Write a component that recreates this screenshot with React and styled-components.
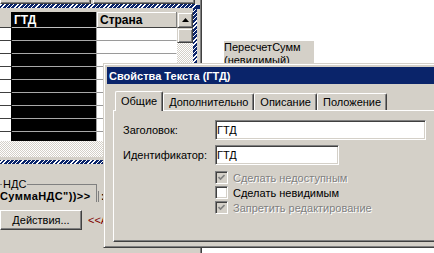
import React from 'react';
import styled, { createGlobalStyle } from 'styled-components';

const face = '#d4d0c8';

const GlobalStyle = createGlobalStyle`
  html, body { margin: 0; padding: 0; }
  body {
    background: ${face};
    font-family: "Liberation Sans", Arial, sans-serif;
    font-size: 11px;
    color: #000;
    overflow: hidden;
  }
  * { box-sizing: border-box; }
`;

const Screen = styled.div`
  position: relative;
  width: 434px;
  height: 253px;
  overflow: hidden;
  display: grid;
  grid-template-columns: 200px 1fr;
`;

const LeftPane = styled.div`
  display: flex;
  flex-direction: column;
  min-width: 0;
`;

const TopButtons = styled.div`
  display: flex;
  gap: 2px;
  height: 4px;
`;

const ButtonStub = styled.div`
  width: ${p => p.$w}px;
  border-left: 1px solid #fff;
  border-right: 1px solid #404040;
  border-bottom: 1px solid #404040;
  box-shadow: inset -1px -1px #808080;
`;

const SelectFrame = styled.div`
  position: relative;
  margin-left: -4px;
  width: 201px;
  padding: 4px;
  background: repeating-linear-gradient(-45deg, #0a246a 0 2px, #fff 2px 3px);
`;

const Handle = styled.div`
  position: absolute;
  top: 1px;
  right: -3px;
  width: 4px;
  height: 4px;
  background: #0a246a;
`;

const FrameInner = styled.div`
  background: ${face};
  padding: 4px 0 3px;
  display: flex;
  flex-direction: column;
`;

const Table = styled.div`
  display: flex;
  height: 129px;
`;

const Grid = styled.div`
  display: grid;
  grid-template-columns: 12px 85px 80px;
  grid-template-rows: 16px;
  grid-auto-rows: 13px;
  width: 177px;
  overflow: hidden;
  background: #fff;
`;

const HeadCell = styled.div`
  display: flex;
  align-items: center;
  padding-left: ${p => (p.$kind === 'sel' ? 2 : 3)}px;
  font-size: 12px;
  font-weight: bold;
  white-space: nowrap;
  background: ${p => (p.$kind === 'sel' ? '#000' : face)};
  color: ${p => (p.$kind === 'sel' ? '#fff' : '#000')};
  border-bottom: 1px solid ${p => (p.$kind === 'sel' ? '#c0c0c0' : '#404040')};
  border-right: 1px solid ${p => (p.$kind === 'stub' ? '#000' : p.$kind === 'sel' ? '#a0a0a0' : '#808080')};
  box-shadow: ${p => (p.$kind === 'plain' ? 'inset 1px 1px #fff' : 'none')};
`;

const Cell = styled.div`
  background: ${p => (p.$kind === 'sel' ? '#000' : '#fff')};
  border-bottom: 1px solid ${p => (p.$kind === 'sel' ? '#a8a8a8' : p.$kind === 'stub' ? '#404040' : '#9a9a9a')};
  border-right: 1px solid ${p => (p.$kind === 'stub' ? '#000' : p.$kind === 'sel' ? '#a0a0a0' : 'transparent')};
`;

const raised = `
  border: 1px solid;
  border-color: ${face} #404040 #404040 ${face};
  box-shadow: inset 1px 1px #fff, inset -1px -1px #808080;
  background: ${face};
`;

const checker = `
  background-color: #fff;
  background-image: repeating-conic-gradient(${face} 0 25%, #fff 0 50%);
  background-size: 2px 2px;
`;

const VScroll = styled.div`
  width: 16px;
  display: flex;
  flex-direction: column;
`;

const ScrollButton = styled.div`
  ${raised}
  height: 16px;
  display: flex;
  align-items: center;
  justify-content: center;
`;

const Thumb = styled.div`
  ${raised}
  height: 15px;
`;

const Track = styled.div`
  ${checker}
  flex: 1;
`;

const HTrack = styled.div`
  ${checker}
  height: 16px;
`;

const BottomArea = styled.div`
  display: flex;
  flex-direction: column;
  padding-top: 14px;
  gap: 8px;
`;

const FieldRow = styled.div`
  display: flex;
  align-items: flex-end;
`;

const GroupBox = styled.fieldset`
  width: 97px;
  height: 24px;
  margin: 0;
  padding: 0 0 1px 0;
  min-width: 0;
  border: none;
  border-top: 1px solid #808080;
  border-right: 1px solid #808080;
`;

const Legend = styled.legend`
  margin-left: 2px;
  padding: 0 1px;
  line-height: 13px;
`;

const Formula = styled.div`
  white-space: nowrap;
  font-weight: bold;
  line-height: 11px;
  letter-spacing: 0.4px;
`;

const SideField = styled.div`
  margin-left: 1px;
  height: 11px;
  padding-left: 2px;
  border-left: 1px solid #808080;
  line-height: 11px;
  font-weight: bold;
`;

const ActionRow = styled.div`
  display: flex;
  align-items: center;
  gap: 6px;
`;

const PushButton = styled.div`
  width: 82px;
  height: 20px;
  display: flex;
  align-items: center;
  justify-content: center;
  border: 1px solid;
  border-color: #fff #404040 #404040 #fff;
  box-shadow: inset -1px -1px #808080;
  u { text-decoration: underline; }
`;

const RedText = styled.span`
  color: #800000;
  white-space: nowrap;
`;

const Canvas = styled.div`
  background: #fff;
  border-left: 1px solid #808080;
  box-shadow: inset 1px 0 #404040;
  padding: 41px 0 0 23px;
`;

const FormLabel = styled.div`
  width: 90px;
  background: ${face};
  line-height: 13px;
`;

const Dialog = styled.div`
  position: absolute;
  left: 103px;
  top: 63px;
  width: 352px;
  height: 185px;
  background: ${face};
  border: 1px solid;
  border-color: ${face} #404040 #404040 ${face};
  box-shadow: inset 1px 1px #fff, inset -1px -1px #808080;
  padding: 3px;
  display: flex;
  flex-direction: column;
`;

const TitleBar = styled.div`
  height: 17px;
  background: #0a246a;
  color: #fff;
  font-weight: bold;
  padding-left: 2px;
  display: flex;
  align-items: center;
  white-space: nowrap;
`;

const DialogBody = styled.div`
  padding: 7px 0 0 6px;
`;

const TabRow = styled.div`
  display: flex;
  align-items: flex-end;
  height: 19px;
  padding-left: 2px;
`;

const Tab = styled.div`
  position: relative;
  z-index: ${p => (p.$active ? 1 : 0)};
  height: ${p => (p.$active ? 20 : 17)}px;
  margin-bottom: ${p => (p.$active ? -1 : 0)}px;
  padding: 0 5px ${p => (p.$active ? 2 : 0)}px;
  display: flex;
  align-items: center;
  white-space: nowrap;
  background: ${face};
  border-top: 1px solid #fff;
  border-left: 1px solid #fff;
  border-right: 1px solid #404040;
  border-radius: 2px 2px 0 0;
  box-shadow: inset -1px 0 #808080;
`;

const Panel = styled.div`
  height: 132px;
  border: 1px solid;
  border-color: #fff #404040 #404040 #fff;
  box-shadow: inset -1px -1px #808080;
  padding: 9px 0 0 9px;
`;

const FormRow = styled.div`
  display: grid;
  grid-template-columns: 92px auto;
  align-items: center;
  height: 20px;
  margin-bottom: 5px;
`;

const TextInput = styled.input`
  width: ${p => p.$w}px;
  height: 20px;
  margin: 0;
  padding: 0 0 0 1px;
  font: 11px "Liberation Sans", Arial, sans-serif;
  color: #000;
  background: #fff;
  border: 1px solid;
  border-color: #808080 #fff #fff #808080;
  box-shadow: inset 1px 1px #404040, inset -1px -1px ${face};
  outline: none;
`;

const CheckList = styled.div`
  margin: 2px 0 0 92px;
  display: flex;
  flex-direction: column;
`;

const CheckRow = styled.div`
  display: flex;
  align-items: center;
  gap: 5px;
  height: 15px;
  color: ${p => (p.$disabled ? '#808080' : '#000')};
  text-shadow: ${p => (p.$disabled ? '1px 1px #fff' : 'none')};
  white-space: nowrap;
`;

const Box = styled.span`
  width: 13px;
  height: 13px;
  flex: none;
  display: flex;
  align-items: center;
  justify-content: center;
  background: ${p => (p.$disabled ? face : '#fff')};
  border: 1px solid;
  border-color: #808080 #fff #fff #808080;
  box-shadow: inset 1px 1px #404040, inset -1px -1px ${face};
`;

const Check = ({ disabled, checked, children }) => (
  <CheckRow $disabled={disabled}>
    <Box $disabled={disabled}>
      {checked && (
        <svg width="7" height="7" viewBox="0 0 7 7">
          <polyline points="0.5,3 2.5,5 6.5,1" fill="none" stroke={disabled ? '#808080' : '#000'} strokeWidth="1.6" />
        </svg>
      )}
    </Box>
    {children}
  </CheckRow>
);

const rows = Array.from({ length: 9 });

export default function App() {
  return (
    <>
      <GlobalStyle />
      <Screen>
        <LeftPane>
          <TopButtons>
            <ButtonStub $w={91} />
            <ButtonStub $w={102} />
          </TopButtons>
          <SelectFrame>
            <Handle />
            <FrameInner>
              <Table>
                <Grid>
                  <HeadCell $kind="stub" />
                  <HeadCell $kind="sel">ГТД</HeadCell>
                  <HeadCell $kind="plain">Страна</HeadCell>
                  {rows.map((_, i) => (
                    <React.Fragment key={i}>
                      <Cell $kind="stub" />
                      <Cell $kind="sel" />
                      <Cell $kind="plain" />
                    </React.Fragment>
                  ))}
                </Grid>
                <VScroll>
                  <ScrollButton>
                    <svg width="7" height="4" viewBox="0 0 7 4">
                      <polygon points="3.5,0 7,4 0,4" fill="#000" />
                    </svg>
                  </ScrollButton>
                  <Thumb />
                  <Track />
                </VScroll>
              </Table>
              <HTrack />
            </FrameInner>
          </SelectFrame>
          <BottomArea>
            <FieldRow>
              <GroupBox>
                <Legend>НДС</Legend>
                <Formula>СуммаНДС"))&gt;&gt;</Formula>
              </GroupBox>
              <SideField>:</SideField>
            </FieldRow>
            <ActionRow>
              <PushButton>
                <span><u>Д</u>ействия...</span>
              </PushButton>
              <RedText>&lt;&lt;Активизировать&gt;&gt;</RedText>
            </ActionRow>
          </BottomArea>
        </LeftPane>
        <Canvas>
          <FormLabel>
            ПересчетСумм
            <br />
            (невидимый)
          </FormLabel>
        </Canvas>
        <Dialog>
          <TitleBar>Свойства Текста (ГТД)</TitleBar>
          <DialogBody>
            <TabRow>
              <Tab $active>Общие</Tab>
              <Tab>Дополнительно</Tab>
              <Tab>Описание</Tab>
              <Tab>Положение</Tab>
            </TabRow>
            <Panel>
              <FormRow>
                <span>Заголовок:</span>
                <TextInput $w={211} value="ГТД" readOnly />
              </FormRow>
              <FormRow>
                <span>Идентификатор:</span>
                <TextInput $w={124} value="ГТД" readOnly />
              </FormRow>
              <CheckList>
                <Check disabled checked>Сделать недоступным</Check>
                <Check>Сделать невидимым</Check>
                <Check disabled checked>Запретить редактирование</Check>
              </CheckList>
            </Panel>
          </DialogBody>
        </Dialog>
      </Screen>
    </>
  );
}
